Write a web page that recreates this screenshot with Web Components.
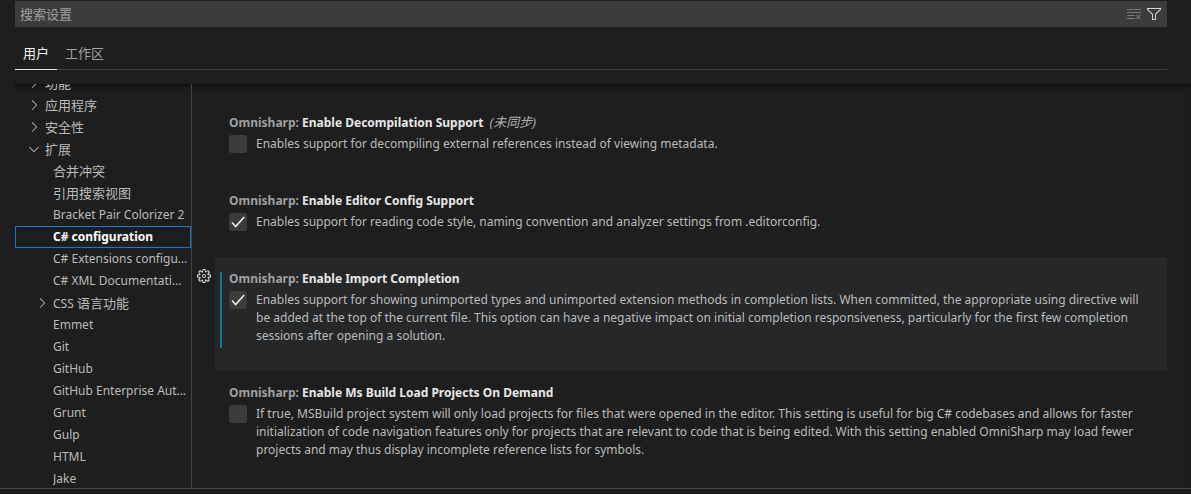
<!DOCTYPE html>
<html lang="zh-CN">
<head>
<meta charset="utf-8">
<title>设置</title>
<style>
  body { margin: 0; background: #1e1e1e; color: #bbb; font: 12px/18px "Noto Sans", "Noto Sans CJK SC", sans-serif; }
  .zh { font-size: 13px; }
</style>
</head>
<body>
<settings-editor>
  <settings-search slot="search" placeholder="搜索设置"></settings-search>
  <settings-tab slot="tabs" active>用户</settings-tab>
  <settings-tab slot="tabs">工作区</settings-tab>

  <toc-tree slot="toc">
    <toc-row state="closed"><span class="zh">功能</span></toc-row>
    <toc-row state="closed"><span class="zh">应用程序</span></toc-row>
    <toc-row state="closed"><span class="zh">安全性</span></toc-row>
    <toc-row state="open"><span class="zh">扩展</span></toc-row>
    <toc-row nested><span class="zh">合并冲突</span></toc-row>
    <toc-row nested><span class="zh">引用搜索视图</span></toc-row>
    <toc-row nested>Bracket Pair Colorizer 2</toc-row>
    <toc-row nested selected>C# configuration</toc-row>
    <toc-row nested>C# Extensions configuration</toc-row>
    <toc-row nested>C# XML Documentation Comments</toc-row>
    <toc-row nested state="closed">CSS <span class="zh">语言功能</span></toc-row>
    <toc-row nested>Emmet</toc-row>
    <toc-row nested>Git</toc-row>
    <toc-row nested>GitHub</toc-row>
    <toc-row nested>GitHub Enterprise Authentication</toc-row>
    <toc-row nested>Grunt</toc-row>
    <toc-row nested>Gulp</toc-row>
    <toc-row nested>HTML</toc-row>
    <toc-row nested>Jake</toc-row>
  </toc-tree>

  <setting-item category="Omnisharp:" name="Enable Decompilation Support" note="(未同步)">Enables support for decompiling external references instead of viewing metadata.</setting-item>
  <setting-item category="Omnisharp:" name="Enable Editor Config Support" checked>Enables support for reading code style, naming convention and analyzer settings from .editorconfig.</setting-item>
  <setting-item category="Omnisharp:" name="Enable Import Completion" checked focused>Enables support for showing unimported types and unimported extension methods in completion lists. When committed, the appropriate using directive will be added at the top of the current file. This option can have a negative impact on initial completion responsiveness, particularly for the first few completion sessions after opening a solution.</setting-item>
  <setting-item category="Omnisharp:" name="Enable Ms Build Load Projects On Demand">If true, MSBuild project system will only load projects for files that were opened in the editor. This setting is useful for big C# codebases and allows for faster initialization of code navigation features only for projects that are relevant to code that is being edited. With this setting enabled OmniSharp may load fewer projects and may thus display incomplete reference lists for symbols.</setting-item>
</settings-editor>

<script>
class Base extends HTMLElement {
  render(html) {
    if (this.shadowRoot) return;
    this.attachShadow({ mode: 'open' }).innerHTML = '<style>*{box-sizing:border-box}button,input{font:inherit;color:inherit;background:none;border:0;padding:0;margin:0;outline:0}svg{display:block;fill:currentColor}</style>' + html;
  }
}

customElements.define('ui-icon', class extends Base {
  static paths = {
    right: 'M10.072 8.024L5.715 3.667l.618-.62L11 7.716v.618L6.333 13l-.618-.619 4.357-4.357z',
    down: 'M7.976 10.072l4.357-4.357.62.618L8.284 11h-.618L3 6.333l.619-.618 4.357 4.357z',
    clear: 'M10 12.6l.7.7 1.6-1.6 1.6 1.6.8-.7L13 11l1.7-1.6-.8-.8-1.6 1.7-1.6-1.7-.7.8 1.6 1.6-1.6 1.6zM1 4h14V3H1v1zm0 3h14V6H1v1zm8 2.5V9H1v1h8v-.5zM9 13v-1H1v1h8z',
    filter: 'M15 2v1.67l-5 4.759V14H6V8.429l-5-4.76V2h14zM7 8v5h2V8l5-4.76V3H2v.24L7 8z',
    gear: 'M9.1 4.4L8.6 2H7.4l-.5 2.4-.7.3-2-1.3-.9.8 1.3 2-.2.7-2.4.5v1.2l2.4.5.3.8-1.3 2 .8.8 2-1.3.8.3.4 2.3h1.2l.5-2.4.8-.3 2 1.3.8-.8-1.3-2 .3-.8 2.3-.4V7.4l-2.4-.5-.3-.8 1.3-2-.8-.8-2 1.3-.7-.2zM9.4 1l.5 2.4L12 2.1l2 2-1.4 2.1 2.4.4v2.8l-2.4.5L14 12l-2 2-2.1-1.4-.5 2.4H6.6l-.5-2.4L4 13.9l-2-2 1.4-2.1L1 9.4V6.6l2.4-.5L2.1 4l2-2 2.1 1.4.4-2.4h2.8zm.6 7c0 1.1-.9 2-2 2s-2-.9-2-2 .9-2 2-2 2 .9 2 2zM8 9c.6 0 1-.4 1-1s-.4-1-1-1-1 .4-1 1 .4 1 1 1z'
  };
  connectedCallback() {
    const d = this.constructor.paths[this.getAttribute('name')] || '';
    this.render(`<style>:host{display:block;width:16px;height:16px;flex:none}</style>
      <svg width="16" height="16" viewBox="0 0 16 16" aria-hidden="true"><path fill-rule="evenodd" d="${d}"/></svg>`);
  }
});

customElements.define('settings-search', class extends Base {
  connectedCallback() {
    this.render(`<style>
      :host{display:flex;align-items:center;gap:4px;height:26px;padding:0 5px;background:#3c3c3c}
      input{flex:1;min-width:0;height:26px;font-size:13px;color:#ccc}
      input::placeholder{color:#a0a0a0;opacity:1}
      .off{color:#787878}
      .on{color:#d4d4d4}
    </style>
    <input type="text" aria-label="搜索设置" placeholder="${this.getAttribute('placeholder')}">
    <button class="off" aria-label="清除设置搜索输入" disabled><ui-icon name="clear"></ui-icon></button>
    <button class="on" aria-label="筛选设置"><ui-icon name="filter"></ui-icon></button>`);
  }
});

customElements.define('settings-tab', class extends Base {
  connectedCallback() {
    this.render(`<style>
      :host{display:block;color:#a3a3a3}
      :host([active]){color:#f0f0f0}
      button{display:block;height:33px;padding:0 8px;font-size:13px;border-bottom:1px solid transparent}
      :host([active]) button{border-color:#e7e7e7}
    </style><button role="tab"><slot></slot></button>`);
  }
});

customElements.define('toc-tree', class extends Base {
  connectedCallback() {
    this.render(`<style>:host{display:block;overflow:hidden;height:100%}</style><slot></slot>`);
    // Opens partly scrolled, with the first group cut by the header.
    requestAnimationFrame(() => { this.scrollTop = 12; });
  }
});

customElements.define('toc-row', class extends Base {
  connectedCallback() {
    const icon = { open: 'down', closed: 'right' }[this.getAttribute('state')];
    this.render(`<style>
      :host{display:block;height:22px}
      button{display:flex;align-items:center;gap:3px;width:100%;height:22px;padding:0 3px 0 11px;text-align:left;border:0 solid #007fd4}
      :host([nested]) button{padding-left:19px}
      :host([selected]) button{border-width:1px;padding:0 2px 0 18px;color:#fff;font-weight:700}
      .twist{width:16px;flex:none}
      .label{flex:1;min-width:0;line-height:22px;overflow:hidden;text-overflow:ellipsis;white-space:nowrap}
    </style>
    <button><span class="twist">${icon ? `<ui-icon name="${icon}"></ui-icon>` : ''}</span><span class="label"><slot></slot></span></button>`);
  }
});

customElements.define('setting-item', class extends Base {
  connectedCallback() {
    const a = n => this.getAttribute(n) || '';
    this.render(`<style>
      :host{display:grid;grid-template-columns:23px minmax(0,1fr)}
      .gear{display:none;align-self:start;justify-self:center;margin-top:11px;color:#d4d4d4}
      :host([focused]) .gear{display:block}
      .body{grid-column:2;position:relative;padding:13px 14px 26px}
      :host([focused]) .body{background:#252729}
      :host([focused]) .body::before{content:"";position:absolute;left:5px;top:15px;bottom:23px;width:2px;background:#0c7d9d}
      h3{margin:0 0 3px;font-size:12px;line-height:18px;font-weight:700;color:#e7e7e7}
      .cat{color:#a0a0a0}
      em{margin-left:3px;font-size:13px;line-height:1;font-weight:400;color:#b0b0b0}
      .row{display:grid;grid-template-columns:18px minmax(0,1fr);column-gap:9px;align-items:start}
      .row input{grid-area:1/1;appearance:none;width:18px;height:18px;border-radius:3px;background:#3c3c3c}
      .row svg{grid-area:1/1;visibility:hidden;pointer-events:none;fill:none;stroke:#f0f0f0;stroke-width:1.5}
      .row input:checked + svg{visibility:visible}
      label{grid-area:1/2}
    </style>
    <button class="gear" aria-label="更多操作"><ui-icon name="gear"></ui-icon></button>
    <div class="body">
      <h3><span class="cat">${a('category')}</span> ${a('name')} ${a('note') && `<em>${a('note')}</em>`}</h3>
      <div class="row">
        <input type="checkbox" id="box" ${this.hasAttribute('checked') ? 'checked' : ''}>
        <svg width="18" height="18" viewBox="0 0 18 18"><path d="M3 9.6L6.6 13.6L15.2 3.9"/></svg>
        <label for="box"><slot></slot></label>
      </div>
    </div>`);
  }
});

customElements.define('settings-editor', class extends Base {
  connectedCallback() {
    this.render(`<style>
      :host{display:flex;box-sizing:border-box;flex-direction:column;height:100vh;padding-top:1px;overflow:hidden}
      header{flex:none;padding:0 24px 14px 15px}
      .tabs{display:flex;margin-top:10px;box-shadow:inset 0 -1px #404040}
      main{flex:1;min-height:0;display:grid;grid-template-columns:177px minmax(0,1fr);grid-template-rows:minmax(0,1fr);margin-left:15px;box-shadow:inset 0 6px 6px -6px #000}
      nav{min-height:0;border-right:1px solid #444}
      section{min-height:0;overflow:hidden;padding:17px 24px 0 0}
      footer{flex:none;height:6px;border-top:1px solid #444;background:#1e1b1d}
    </style>
    <header>
      <slot name="search"></slot>
      <div class="tabs" role="tablist"><slot name="tabs"></slot></div>
    </header>
    <main>
      <nav><slot name="toc"></slot></nav>
      <section><slot></slot></section>
    </main>
    <footer></footer>`);
  }
});
</script>
</body>
</html>
